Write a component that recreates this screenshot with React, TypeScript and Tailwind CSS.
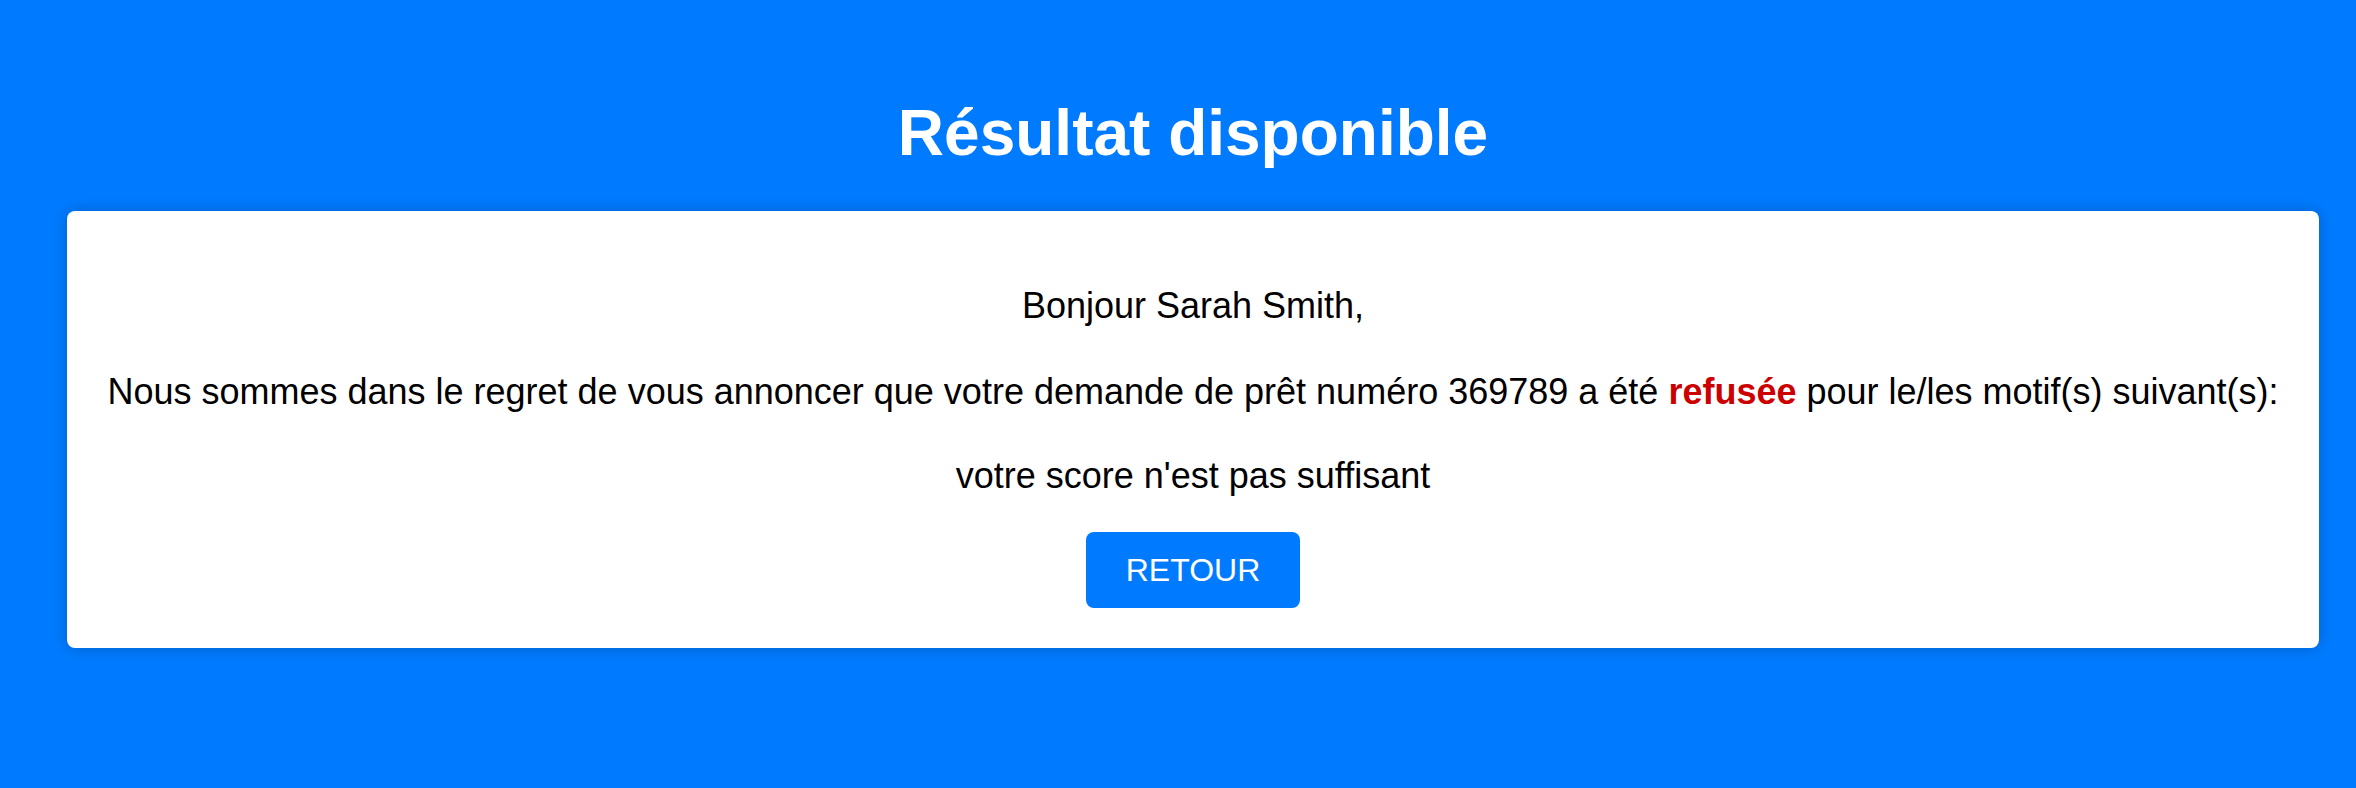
// Loan result page
const App = () => {
  return (
    <div className="min-h-screen w-full bg-[#007bff] font-['Liberation_Sans',Arial,sans-serif] text-black">
      {/* Container for title and card */}
      <div className="pl-[67px] pr-[37px] pt-[96px]">
        {/* Title */}
        <h1 className="text-center text-[64px] leading-[74px] font-bold text-white">
          Résultat disponible
        </h1>

        {/* Card */}
        <div className="mt-[41px] flex h-[437px] flex-col items-center rounded-lg bg-white pt-[74px] shadow-[0_0_16px_rgba(0,0,0,0.22)]">
          <p className="text-[36px] leading-[41px]">Bonjour Sarah Smith,</p>
          <p className="mt-[45px] text-[36px] leading-[41px]">
            Nous sommes dans le regret de vous annoncer que votre demande de
            prêt numéro 369789 a été{" "}
            <span className="font-bold text-[#cc0000]">refusée</span> pour
            le/les motif(s) suivant(s):
          </p>
          <p className="mt-[43px] text-[36px] leading-[41px]">
            votre score n'est pas suffisant
          </p>

          {/* Back button */}
          <button className="mt-[36px] flex h-[76px] w-[214px] items-center justify-center rounded-lg bg-[#007bff] text-[32px] text-white">
            RETOUR
          </button>
        </div>
      </div>
    </div>
  );
};

export default App;
